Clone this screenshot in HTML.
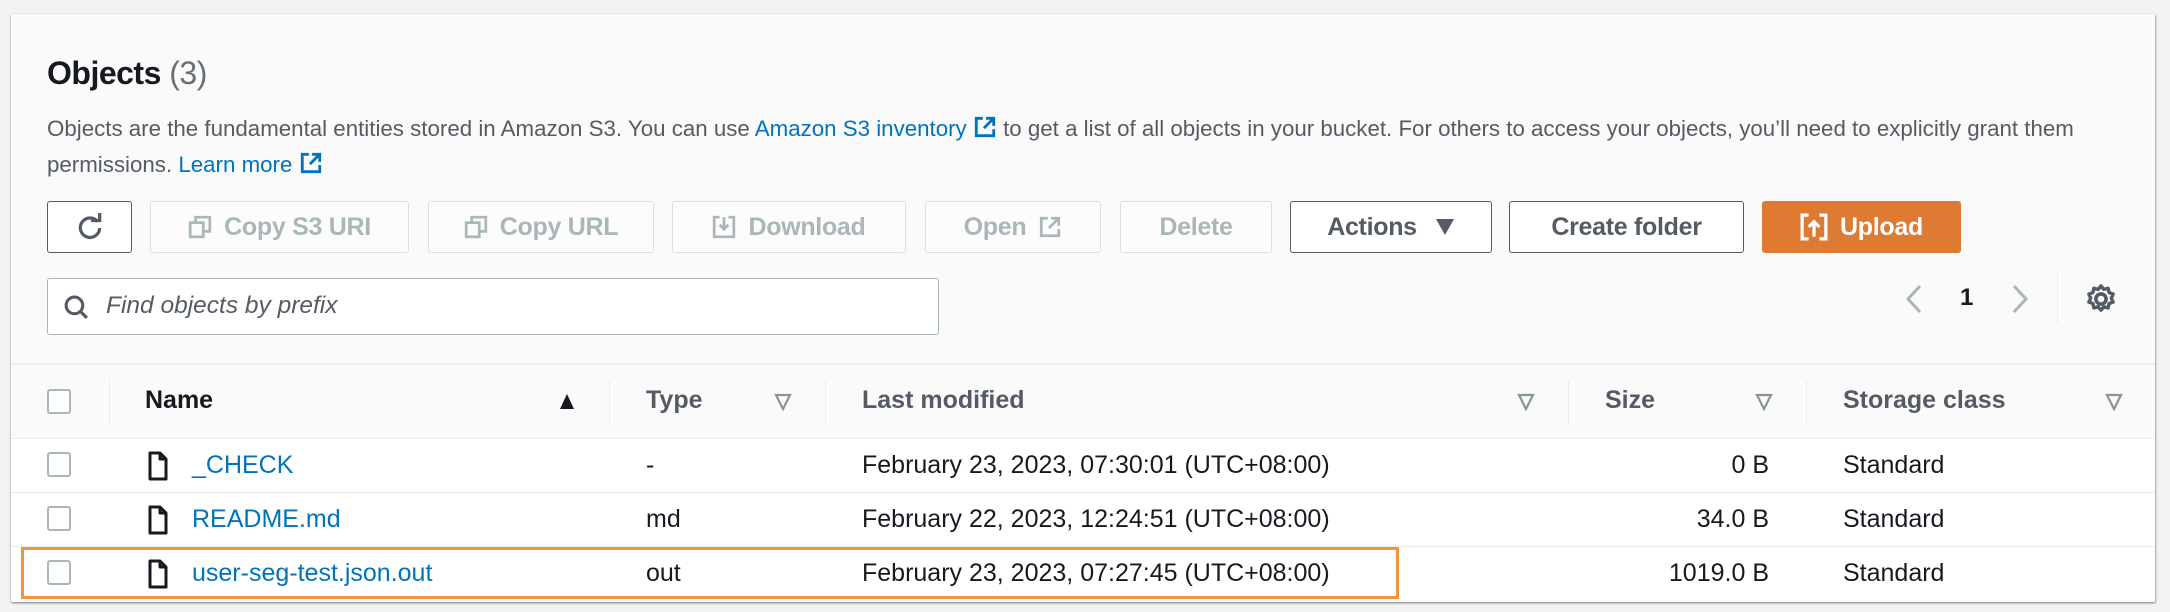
<!DOCTYPE html>
<html><head><meta charset="utf-8"><style>
*{box-sizing:border-box;margin:0;padding:0}
body{width:2170px;height:612px;background:#f2f3f3;font-family:"Liberation Sans",sans-serif;color:#16191f;position:relative;overflow:hidden}
.a{position:absolute}
.panel{left:11px;top:14px;width:2144px;height:588px;background:#fafafa;box-shadow:0 1px 2px rgba(0,28,36,.4),1px 1px 2px rgba(0,28,36,.2);border-radius:1px}
.btn{position:absolute;top:201px;height:52px;border:1.5px solid #545b64;border-radius:3px;background:#fff;font-weight:bold;font-size:25px;letter-spacing:-0.3px;color:#545b64;display:flex;align-items:center;justify-content:center;gap:12px;white-space:nowrap}
.dis{border:1.5px solid #dcdfe0;color:#aab7b8;background:#fcfcfc}
.link{color:#0073bb}
.hdr{font-weight:bold;font-size:25px;color:#545b64;top:386px}
.cb{position:absolute;left:47px;width:24px;height:25px;border:2px solid #aab7b8;border-radius:3px;background:#fff}
.row{position:absolute;left:11px;width:2144px;height:54px;background:#fff;border-top:1.5px solid #eaeded}
.cell{position:absolute;font-size:25px;top:12px;white-space:nowrap}
.dv{position:absolute;width:1px;height:44px;top:380px;background:#eaeded}
.tri{position:absolute;top:393px}
</style></head><body>
<div class="a panel"></div>
<div class="a" style="left:47px;top:55px;font-size:32px;font-weight:bold;letter-spacing:-0.5px">Objects <span style="font-weight:normal;color:#687078">(3)</span></div>
<div class="a" style="left:47px;top:111px;font-size:22.3px;line-height:36px;color:#545b64;width:2100px;white-space:nowrap">Objects are the fundamental entities stored in Amazon S3. You can use <span class="link">Amazon S3 inventory <svg width="24" height="24" viewBox="0 0 22 22" style="vertical-align:-3px"><path d="M9 3H3v16h16v-6M12 3h7v7M19 3l-9 9" fill="none" stroke="#0073bb" stroke-width="2.6"/></svg></span> to get a list of all objects in your bucket. For others to access your objects, you’ll need to explicitly grant them<br>permissions. <span class="link">Learn more <svg width="24" height="24" viewBox="0 0 22 22" style="vertical-align:-3px"><path d="M9 3H3v16h16v-6M12 3h7v7M19 3l-9 9" fill="none" stroke="#0073bb" stroke-width="2.6"/></svg></span></div>

<div class="btn" style="left:47px;width:85px"><svg width="28" height="28" viewBox="0 0 26 26"><path d="M20 8A9 9 0 1 0 22 14" fill="none" stroke="#545b64" stroke-width="3"/><path d="M14 7h8V0" fill="none" stroke="#545b64" stroke-width="3"/></svg></div>
<div class="btn dis" style="left:150px;width:259px"><svg width="24" height="24" viewBox="0 0 22 22"><rect x="2" y="7" width="12" height="13" fill="none" stroke="#aab7b8" stroke-width="2.5"/><path d="M7 7V2h13v13h-6" fill="none" stroke="#aab7b8" stroke-width="2.5"/></svg>Copy S3 URI</div>
<div class="btn dis" style="left:428px;width:226px"><svg width="24" height="24" viewBox="0 0 22 22"><rect x="2" y="7" width="12" height="13" fill="none" stroke="#aab7b8" stroke-width="2.5"/><path d="M7 7V2h13v13h-6" fill="none" stroke="#aab7b8" stroke-width="2.5"/></svg>Copy URL</div>
<div class="btn dis" style="left:672px;width:234px"><svg width="24" height="24" viewBox="0 0 22 22"><path d="M7 2H2v18h18V2h-5M11 2v11M7 9l4 4 4-4" fill="none" stroke="#aab7b8" stroke-width="2.5"/></svg>Download</div>
<div class="btn dis" style="left:925px;width:176px">Open <svg width="24" height="24" viewBox="0 0 22 22"><path d="M9 3H3v16h16v-6M12 3h7v7M19 3l-9 9" fill="none" stroke="#aab7b8" stroke-width="2.5"/></svg></div>
<div class="btn dis" style="left:1120px;width:152px">Delete</div>
<div class="btn" style="left:1290px;width:202px;gap:18px">Actions <svg width="20" height="18" viewBox="0 0 20 18"><path d="M1 1h18L10 17z" fill="#545b64"/></svg></div>
<div class="btn" style="left:1509px;width:235px">Create folder</div>
<div class="btn" style="left:1762px;width:199px;background:#df7a32;border-color:#df7a32;color:#fff"><svg width="28" height="28" viewBox="0 0 26 26"><path d="M8 2H2v22h6M18 2h6v22h-6M13 22V8M8 13l5-5 5 5" fill="none" stroke="#fff" stroke-width="3"/></svg>Upload</div>

<div class="a" style="left:47px;top:278px;width:892px;height:57px;border:1.5px solid #aab7b8;border-radius:3px;background:#fff"></div>
<svg class="a" style="left:63px;top:294px" width="27" height="27" viewBox="0 0 26 26"><circle cx="11" cy="11" r="8" fill="none" stroke="#545b64" stroke-width="3"/><path d="M17 17l6 6" stroke="#545b64" stroke-width="3"/></svg>
<div class="a" style="left:106px;top:292px;font-size:24.5px;font-style:italic;color:#545b64">Find objects by prefix</div>

<svg class="a" style="left:1904px;top:284px" width="20" height="30" viewBox="0 0 20 30"><path d="M16 2L4 15l12 13" fill="none" stroke="#aab7b8" stroke-width="3"/></svg>
<div class="a" style="left:1960px;top:284px;font-size:24px;font-weight:bold">1</div>
<svg class="a" style="left:2010px;top:284px" width="20" height="30" viewBox="0 0 20 30"><path d="M4 2l12 13L4 28" fill="none" stroke="#aab7b8" stroke-width="3"/></svg>
<div class="a" style="left:2057px;top:271px;width:1px;height:52px;background:#eaeded"></div>
<svg class="a" style="left:2084px;top:282px" width="34" height="34" viewBox="0 0 30 30"><circle cx="15" cy="15" r="4.5" fill="none" stroke="#545b64" stroke-width="3.2"/><path d="M15 3.5l2.5 3 3.8-1 .8 3.8 3.6 1.4-1.6 3.5 1.6 3.5-3.6 1.4-.8 3.8-3.8-1-2.5 3-2.5-3-3.8 1-.8-3.8-3.6-1.4 1.6-3.5-1.6-3.5 3.6-1.4.8-3.8 3.8 1z" fill="none" stroke="#545b64" stroke-width="3" stroke-linejoin="round"/></svg>

<div class="a" style="left:11px;top:363px;width:2144px;height:1.5px;background:#eaeded"></div>
<div class="cb" style="top:389px"></div>
<div class="dv" style="left:109px"></div><div class="dv" style="left:609px"></div><div class="dv" style="left:825px"></div><div class="dv" style="left:1568px"></div><div class="dv" style="left:1806px"></div>
<div class="a hdr" style="left:145px;color:#16191f">Name</div>
<svg class="tri" style="left:558px" width="18" height="18"><path d="M9 1L16 16H2z" fill="#16191f"/></svg>
<div class="a hdr" style="left:646px">Type</div>
<div class="a hdr" style="left:862px">Last modified</div>
<div class="a hdr" style="left:1605px">Size</div>
<div class="a hdr" style="left:1843px">Storage class</div>
<svg class="tri" style="left:774px" width="18" height="18"><path d="M2 2H16L9 16z" fill="none" stroke="#879596" stroke-width="2.2"/></svg>
<svg class="tri" style="left:1517px" width="18" height="18"><path d="M2 2H16L9 16z" fill="none" stroke="#879596" stroke-width="2.2"/></svg>
<svg class="tri" style="left:1755px" width="18" height="18"><path d="M2 2H16L9 16z" fill="none" stroke="#879596" stroke-width="2.2"/></svg>
<svg class="tri" style="left:2105px" width="18" height="18"><path d="M2 2H16L9 16z" fill="none" stroke="#879596" stroke-width="2.2"/></svg>

<div class="row" style="top:438px"><div class="cb" style="left:36px;top:13px"></div>
<svg class="a" style="left:136px;top:12px" width="22" height="30" viewBox="0 0 22 30"><path d="M3 2h10l6 6v20H3z M13 2v6h6" fill="none" stroke="#16191f" stroke-width="3" stroke-linejoin="round"/></svg>
<div class="cell link" style="left:181px">_CHECK</div><div class="cell" style="left:635px">-</div><div class="cell" style="left:851px">February 23, 2023, 07:30:01 (UTC+08:00)</div><div class="cell" style="right:386px">0 B</div><div class="cell" style="left:1832px">Standard</div></div>
<div class="row" style="top:492px"><div class="cb" style="left:36px;top:13px"></div>
<svg class="a" style="left:136px;top:12px" width="22" height="30" viewBox="0 0 22 30"><path d="M3 2h10l6 6v20H3z M13 2v6h6" fill="none" stroke="#16191f" stroke-width="3" stroke-linejoin="round"/></svg>
<div class="cell link" style="left:181px">README.md</div><div class="cell" style="left:635px">md</div><div class="cell" style="left:851px">February 22, 2023, 12:24:51 (UTC+08:00)</div><div class="cell" style="right:386px">34.0 B</div><div class="cell" style="left:1832px">Standard</div></div>
<div class="row" style="top:546px;height:54px"><div class="cb" style="left:36px;top:13px"></div>
<svg class="a" style="left:136px;top:12px" width="22" height="30" viewBox="0 0 22 30"><path d="M3 2h10l6 6v20H3z M13 2v6h6" fill="none" stroke="#16191f" stroke-width="3" stroke-linejoin="round"/></svg>
<div class="cell link" style="left:181px">user-seg-test.json.out</div><div class="cell" style="left:635px">out</div><div class="cell" style="left:851px">February 23, 2023, 07:27:45 (UTC+08:00)</div><div class="cell" style="right:386px">1019.0 B</div><div class="cell" style="left:1832px">Standard</div></div>
<div class="a" style="left:21px;top:547px;width:1378px;height:52px;border:3.5px solid #f0963a"></div>
</body></html>
